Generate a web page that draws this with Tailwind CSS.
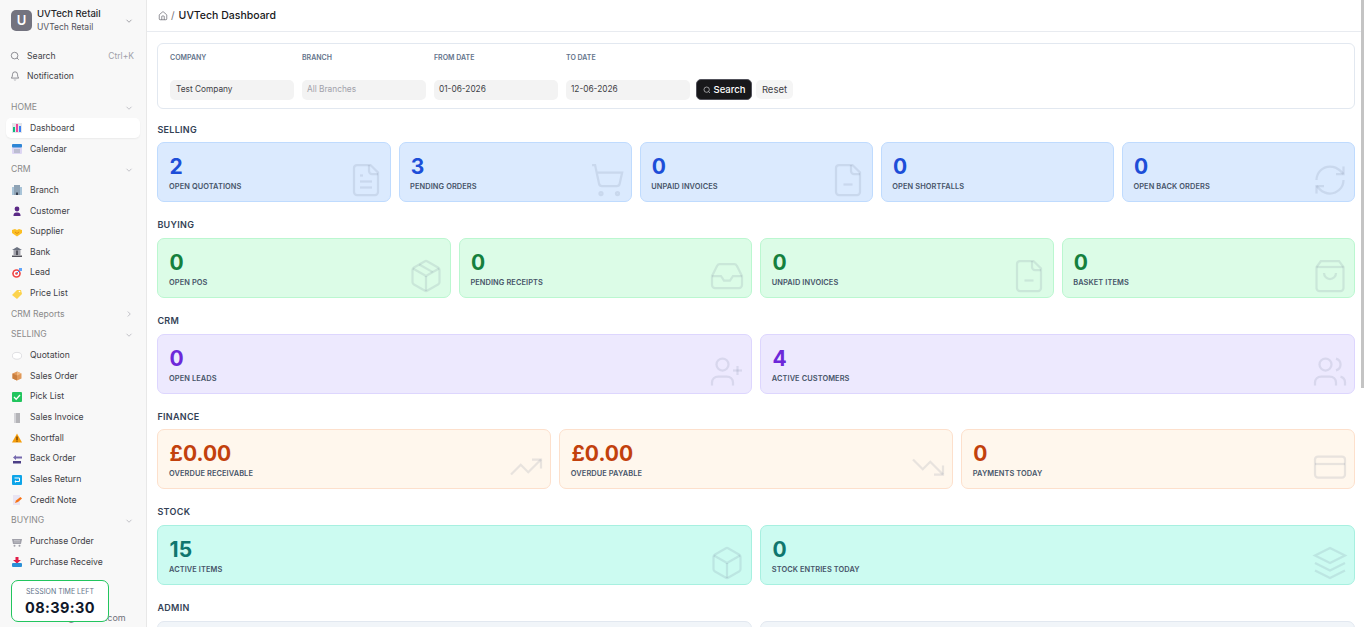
<!DOCTYPE html>
<html lang="en">
<head>
	<meta charset="UTF-8">
	<title>UVTech Dashboard</title>
	<script src="https://cdn.jsdelivr.net/npm/@tailwindcss/browser@4"></script>
</head>
<body class="h-screen overflow-hidden bg-white font-['Inter',sans-serif] text-[#27272a]">
<div class="flex h-full">
	<!-- sidebar -->
	<aside class="relative w-[147px] shrink-0 h-full overflow-hidden bg-[#f8f8f8] border-r border-[#e8e8e8]">
		<div class="flex items-center h-[41px] pl-[11px] pr-[12px]">
			<div class="w-[21px] h-[21px] rounded-[5px] bg-[#73737f] text-white flex items-center justify-center text-[13px] font-semibold">U</div>
			<div class="ml-[5px] flex-1 leading-[12.5px]">
				<div class="text-[9.5px] font-medium text-[#27272a]">UVTech Retail</div>
				<div class="text-[8.5px] text-[#52525b]">UVTech Retail</div>
			</div>
			<svg class="w-[10px] h-[10px] text-[#71717a]" viewBox="0 0 24 24" fill="none" stroke="currentColor" stroke-width="1.500"><path d="m6 9 6 6 6-6"/></svg>
		</div>
		<div class="mt-[5px] pl-[10px] pr-[12px] text-[8.65px] text-[#3f3f46]">
			<div class="flex items-center h-[20px]">
				<svg class="w-[10px] h-[10px] text-[#52525b]" viewBox="0 0 24 24" fill="none" stroke="currentColor" stroke-width="1.500"><circle cx="11" cy="11" r="8"/><path d="m21 21-4.300-4.300"/></svg>
				<span class="ml-[7px] flex-1">Search</span><span class="text-[#a1a1aa] text-[8.5px]">Ctrl+K</span>
			</div>
			<div class="flex items-center h-[20px]">
				<svg class="w-[10px] h-[10px] text-[#52525b]" viewBox="0 0 24 24" fill="none" stroke="currentColor" stroke-width="1.500"><path d="M6 8a6 6 0 0 1 12 0c0 7 3 9 3 9H3s3-2 3-9"/><path d="M10.300 21a1.940 1.940 0 0 0 3.400 0"/></svg>
				<span class="ml-[7px]">Notification</span>
			</div>
		</div>
		<nav class="mt-[11.4px] text-[8.65px] text-[#3f3f46]">
			<div class="flex items-center justify-between h-[20.67px] pl-[11px] pr-[12px] text-[#8a8a8a]">HOME<svg class="w-[10px] h-[10px]" viewBox="0 0 24 24" fill="none" stroke="#a1a1aa" stroke-width="1.500"><path d="m6 9 6 6 6-6"/></svg></div>
			<div class="flex items-center h-[20px] mb-[0.67px] mx-[6px] pl-[6px] bg-white rounded-[5px] shadow-[0_1px_2px_rgba(0,0,0,0.06)]">
				<svg class="w-[10px] h-[10px]" viewBox="0 0 10 10"><rect width="10" height="10" fill="#e5e7eb"/><rect x="1" y="4" width="2" height="5" fill="#10b981"/><rect x="4" y="1" width="2" height="8" fill="#ec4899"/><rect x="7" y="3" width="2" height="6" fill="#3b82f6"/></svg>
				<span class="ml-[8px]">Dashboard</span>
			</div>
			<div class="flex items-center h-[20.67px] pl-[12px]">
				<svg class="w-[10px] h-[10px]" viewBox="0 0 10 10"><rect width="10" height="10" rx="1" fill="#ddd6f3"/><rect width="10" height="3.500" rx="1" fill="#2f86d6"/><rect x="2" y="5.500" width="6" height="1" fill="#9ca3af"/><rect x="2" y="7.500" width="6" height="1" fill="#9ca3af"/></svg>
				<span class="ml-[8px]">Calendar</span>
			</div>
			<div class="flex items-center justify-between h-[20.67px] pl-[11px] pr-[12px] text-[#8a8a8a]">CRM<svg class="w-[10px] h-[10px]" viewBox="0 0 24 24" fill="none" stroke="#a1a1aa" stroke-width="1.500"><path d="m6 9 6 6 6-6"/></svg></div>
			<div class="flex items-center h-[20.67px] pl-[12px]">
				<svg class="w-[10px] h-[10px]" viewBox="0 0 10 10"><rect y="2" width="10" height="8" fill="#a9c4d8"/><rect x="2" width="6" height="10" fill="#8fa3b5"/><rect x="4" y="7.500" width="2" height="2.500" fill="#374151"/></svg>
				<span class="ml-[8px]">Branch</span>
			</div>
			<div class="flex items-center h-[20.67px] pl-[12px]">
				<svg class="w-[10px] h-[10px]" viewBox="0 0 10 10"><circle cx="5" cy="3" r="2.400" fill="#5b2a86"/><path d="M1.500 10c0-2 .5-3.500 3.500-3.500s3.500 1.500 3.500 3.500z" fill="#5b2a86"/></svg>
				<span class="ml-[8px]">Customer</span>
			</div>
			<div class="flex items-center h-[20.67px] pl-[12px]">
				<svg class="w-[10px] h-[10px]" viewBox="0 0 10 10"><path d="M0 3l3-1 2 1 2-1 3 1v3L5 9.500 0 6z" fill="#fbbf24"/><path d="M3 5l2 1.500L7 5" stroke="#d97706" stroke-width=".7" fill="none"/></svg>
				<span class="ml-[8px]">Supplier</span>
			</div>
			<div class="flex items-center h-[20.67px] pl-[12px]">
				<svg class="w-[10px] h-[10px]" viewBox="0 0 10 10"><path d="M5 0l5 3H0z" fill="#6b7280"/><rect x="1.500" y="3" width="7" height="5" fill="#a1a1aa"/><rect x="4" y="3.500" width="2" height="4.500" fill="#52525b"/><rect y="8.500" width="10" height="1.500" fill="#52525b"/></svg>
				<span class="ml-[8px]">Bank</span>
			</div>
			<div class="flex items-center h-[20.67px] pl-[12px]">
				<svg class="w-[10px] h-[10px]" viewBox="0 0 10 10"><circle cx="4.500" cy="5.500" r="4.300" fill="#ef4444"/><circle cx="4.500" cy="5.500" r="2.700" fill="#fff"/><circle cx="4.500" cy="5.500" r="1.300" fill="#ef4444"/><path d="M5 5l3-3" stroke="#3b82f6"/><rect x="7" y="0" width="3" height="3" fill="#60a5fa"/></svg>
				<span class="ml-[8px]">Lead</span>
			</div>
			<div class="flex items-center h-[20.67px] pl-[12px]">
				<svg class="w-[10px] h-[10px]" viewBox="0 0 10 10"><path d="M0 6l5-5 4 0 1 4-5 5z" fill="#fcd34d"/><circle cx="7.500" cy="2.500" r=".8" fill="#fff"/></svg>
				<span class="ml-[8px]">Price List</span>
			</div>
			<div class="flex items-center justify-between h-[20.67px] pl-[11px] pr-[12px] text-[#8a8a8a]">CRM Reports<svg class="w-[10px] h-[10px]" viewBox="0 0 24 24" fill="none" stroke="#a1a1aa" stroke-width="1.500"><path d="m9 18 6-6-6-6"/></svg></div>
			<div class="flex items-center justify-between h-[20.67px] pl-[11px] pr-[12px] text-[#8a8a8a]">SELLING<svg class="w-[10px] h-[10px]" viewBox="0 0 24 24" fill="none" stroke="#a1a1aa" stroke-width="1.500"><path d="m6 9 6 6 6-6"/></svg></div>
			<div class="flex items-center h-[20.67px] pl-[12px]">
				<svg class="w-[10px] h-[10px]" viewBox="0 0 10 10"><ellipse cx="5" cy="4.800" rx="4.600" ry="3.400" fill="#fff" stroke="#d4d4d8" stroke-width=".7"/></svg>
				<span class="ml-[8px]">Quotation</span>
			</div>
			<div class="flex items-center h-[20.67px] pl-[12px]">
				<svg class="w-[10px] h-[10px]" viewBox="0 0 10 10"><path d="M5 .5l4.500 2v5L5 9.500.5 7.500v-5z" fill="#e0995a"/><path d="M5 .5l4.500 2L5 4.500z" fill="#f0bb85"/><path d="M5 4.500v5L.5 7.500v-5z" fill="#c97f3f"/></svg>
				<span class="ml-[8px]">Sales Order</span>
			</div>
			<div class="flex items-center h-[20.67px] pl-[12px]">
				<svg class="w-[10px] h-[10px]" viewBox="0 0 10 10"><rect width="10" height="10" rx="1" fill="#22c55e"/><path d="M2 5l2.200 2.200L8 3" stroke="#fff" stroke-width="1.300" fill="none"/></svg>
				<span class="ml-[8px]">Pick List</span>
			</div>
			<div class="flex items-center h-[20.67px] pl-[12px]">
				<svg class="w-[10px] h-[10px]" viewBox="0 0 10 10"><rect x="2" y="0" width="6" height="10" fill="#b4b4b8"/><rect x="2" y="0" width="2" height="10" fill="#d4d4d8"/></svg>
				<span class="ml-[8px]">Sales Invoice</span>
			</div>
			<div class="flex items-center h-[20.67px] pl-[12px]">
				<svg class="w-[10px] h-[10px]" viewBox="0 0 10 10"><path d="M5 .5L10 9.500H0z" fill="#f59e0b"/><rect x="4.500" y="3.500" width="1" height="3.500" fill="#451a03"/><rect x="4.500" y="7.600" width="1" height="1" fill="#451a03"/></svg>
				<span class="ml-[8px]">Shortfall</span>
			</div>
			<div class="flex items-center h-[20.67px] pl-[12px]">
				<svg class="w-[10px] h-[10px]" viewBox="0 0 10 10"><path d="M4 1L1 3.500 4 6V4.500h6v-2H4z" fill="#7468ad"/><rect x="1" y="7" width="8" height="2.500" fill="#4c3f86"/></svg>
				<span class="ml-[8px]">Back Order</span>
			</div>
			<div class="flex items-center h-[20.67px] pl-[12px]">
				<svg class="w-[10px] h-[10px]" viewBox="0 0 10 10"><rect width="10" height="10" rx="1" fill="#0ea5e9"/><path d="M2.500 3h5v3.500h-4" stroke="#fff" fill="none"/><path d="M4 5L2.500 6.500 4 8z" fill="#fff"/></svg>
				<span class="ml-[8px]">Sales Return</span>
			</div>
			<div class="flex items-center h-[20.67px] pl-[12px]">
				<svg class="w-[10px] h-[10px]" viewBox="0 0 10 10"><rect x="1" width="7" height="10" fill="#e9e5f3"/><path d="M3 8l1-2.500L8.500 2 10 3.500 6 7z" fill="#f97316"/></svg>
				<span class="ml-[8px]">Credit Note</span>
			</div>
			<div class="flex items-center justify-between h-[20.67px] pl-[11px] pr-[12px] text-[#8a8a8a]">BUYING<svg class="w-[10px] h-[10px]" viewBox="0 0 24 24" fill="none" stroke="#a1a1aa" stroke-width="1.500"><path d="m6 9 6 6 6-6"/></svg></div>
			<div class="flex items-center h-[20.67px] pl-[12px]">
				<svg class="w-[10px] h-[10px]" viewBox="0 0 10 10"><path d="M0 2h10l-1 5H1z" fill="#a1a1aa"/><path d="M2 3.500h6M2 5h6" stroke="#d4d4d8" stroke-width=".6"/><circle cx="2.500" cy="8.700" r="1" fill="#a1a1aa"/><circle cx="7.500" cy="8.700" r="1" fill="#a1a1aa"/></svg>
				<span class="ml-[8px]">Purchase Order</span>
			</div>
			<div class="flex items-center h-[20.67px] pl-[12px]">
				<svg class="w-[10px] h-[10px]" viewBox="0 0 10 10"><path d="M3.500 0h3v3H9L5 6.500 1 3h2.500z" fill="#e11d48"/><rect y="6" width="10" height="4" rx="1" fill="#2b8fd6"/></svg>
				<span class="ml-[8px]">Purchase Receive</span>
			</div>
		</nav>
		<div class="absolute left-[41px] top-[611px] text-[9px] text-[#71717a] whitespace-nowrap">admin@uvtech.com</div>
		<div class="absolute left-[11px] top-[580px] w-[98px] h-[42px] rounded-[7px] border border-[#22c55e] bg-white flex flex-col items-center pt-[6px]">
			<div class="text-[7px] leading-[9px] text-[#64748b]">SESSION TIME LEFT</div>
			<div class="mt-[2px] text-[14.5px] leading-[19px] font-bold tracking-[0.4px] text-[#0f172a]">08:39:30</div>
		</div>
	</aside>

	<!-- main -->
	<main class="relative flex-1 min-w-0 h-full overflow-hidden">
		<header class="flex items-center h-[32px] pl-[11px] border-b border-[#e8ebf0]">
			<svg class="w-[10px] h-[10px] mt-[1px] text-[#52525b]" viewBox="0 0 24 24" fill="none" stroke="currentColor" stroke-width="1.500"><path d="M15 21v-8a1 1 0 0 0-1-1h-4a1 1 0 0 0-1 1v8"/><path d="M3 10a2 2 0 0 1 .709-1.528l7-5.999a2 2 0 0 1 2.582 0l7 5.999A2 2 0 0 1 21 10v9a2 2 0 0 1-2 2H5a2 2 0 0 1-2-2z"/></svg>
			<span class="ml-[3px] text-[10px] text-[#71717a]">/</span>
			<span class="ml-[4px] text-[10.5px] font-medium text-[#18181b]">UVTech Dashboard</span>
		</header>
		<div class="pl-[10.4px] pr-[9px] pt-[11px]">
			<div class="h-[66px] border border-[#e2e8f0] rounded-[6px] pl-[11.6px] pt-[10px] mb-[13.55px]">
				<div class="flex gap-[8px] text-[7px] leading-[8px] font-semibold text-[#64748b]">
					<div class="w-[124px]">COMPANY</div>
					<div class="w-[124px]">BRANCH</div>
					<div class="w-[124px]">FROM DATE</div>
					<div class="w-[124px]">TO DATE</div>
				</div>
				<div class="mt-[17px] flex items-center text-[8.3px] text-[#3f3f46]">
					<div class="w-[124px] h-[20px] rounded-[5px] bg-[#f3f3f3] flex items-center pl-[6px]">Test Company</div>
					<div class="ml-[8px] w-[124px] h-[20px] rounded-[5px] bg-[#f3f3f3] flex items-center pl-[5px] text-[#a1a1aa]">All Branches</div>
					<div class="ml-[8px] w-[124px] h-[20px] rounded-[5px] bg-[#f3f3f3] flex items-center pl-[5px]">01-06-2026</div>
					<div class="ml-[8px] w-[124px] h-[20px] rounded-[5px] bg-[#f3f3f3] flex items-center pl-[5px]">12-06-2026</div>
					<button class="ml-[6px] w-[56px] h-[21px] pt-[1px] rounded-[5px] bg-[#18181b] border border-[#52525b] text-white text-[9.5px] font-medium flex items-center justify-center">
						<svg class="w-[8px] h-[8px] mr-[3px] text-[#d4d4d8]" viewBox="0 0 24 24" fill="none" stroke="currentColor" stroke-width="2"><circle cx="11" cy="11" r="8"/><path d="m21 21-4.300-4.300"/></svg>Search
					</button>
					<button class="ml-[4px] w-[37px] h-[19px] pt-[1px] rounded-[5px] bg-[#f5f5f5] text-[9.5px] text-[#3f3f46] flex items-center justify-center">Reset</button>
				</div>
			</div>

			<section class="mb-[15.95px]">
				<h2 class="text-[9px] leading-[13.75px] font-semibold tracking-[0.3px] text-[#334155] mb-[6px]">SELLING</h2>
				<div class="grid grid-cols-5 gap-[8px]">
					<div class="relative h-[60px] rounded-[7px] border border-[#bfdbfe] bg-[#dbeafe] pl-[10.6px] pt-[12px]">
						<div class="pl-[0.6px] text-[21px] leading-[24px] font-bold text-[#1d4ed8]">2</div>
						<div class="mt-[3px] text-[7.4px] leading-[10px] font-semibold tracking-[0.1px] text-[#475569]">OPEN QUOTATIONS</div>
						<svg class="absolute right-[6px] bottom-[3px] w-[36px] h-[36px] text-[#64748b]/15" viewBox="0 0 24 24" fill="none" stroke="currentColor" stroke-width="1.500"><path d="M15 2H6a2 2 0 0 0-2 2v16a2 2 0 0 0 2 2h12a2 2 0 0 0 2-2V7Z"/><path d="M14 2v4a2 2 0 0 0 2 2h4"/><path d="M10 9H8"/><path d="M16 13H8"/><path d="M16 17H8"/></svg>
					</div>
					<div class="relative h-[60px] rounded-[7px] border border-[#bfdbfe] bg-[#dbeafe] pl-[10.6px] pt-[12px]">
						<div class="pl-[0.6px] text-[21px] leading-[24px] font-bold text-[#1d4ed8]">3</div>
						<div class="mt-[3px] text-[7.4px] leading-[10px] font-semibold tracking-[0.1px] text-[#475569]">PENDING ORDERS</div>
						<svg class="absolute right-[6px] bottom-[3px] w-[36px] h-[36px] text-[#64748b]/15" viewBox="0 0 24 24" fill="none" stroke="currentColor" stroke-width="1.500"><circle cx="8" cy="21" r="1"/><circle cx="19" cy="21" r="1"/><path d="M2.050 2.050h2l2.660 12.420a2 2 0 0 0 2 1.580h9.780a2 2 0 0 0 1.950-1.570l1.650-7.430H5.120"/></svg>
					</div>
					<div class="relative h-[60px] rounded-[7px] border border-[#bfdbfe] bg-[#dbeafe] pl-[10.6px] pt-[12px]">
						<div class="pl-[0.6px] text-[21px] leading-[24px] font-bold text-[#1d4ed8]">0</div>
						<div class="mt-[3px] text-[7.4px] leading-[10px] font-semibold tracking-[0.1px] text-[#475569]">UNPAID INVOICES</div>
						<svg class="absolute right-[6px] bottom-[3px] w-[36px] h-[36px] text-[#64748b]/15" viewBox="0 0 24 24" fill="none" stroke="currentColor" stroke-width="1.500"><path d="M15 2H6a2 2 0 0 0-2 2v16a2 2 0 0 0 2 2h12a2 2 0 0 0 2-2V7Z"/><path d="M14 2v4a2 2 0 0 0 2 2h4"/><path d="M9 15h6"/></svg>
					</div>
					<div class="relative h-[60px] rounded-[7px] border border-[#bfdbfe] bg-[#dbeafe] pl-[10.6px] pt-[12px]">
						<div class="pl-[0.6px] text-[21px] leading-[24px] font-bold text-[#1d4ed8]">0</div>
						<div class="mt-[3px] text-[7.4px] leading-[10px] font-semibold tracking-[0.1px] text-[#475569]">OPEN SHORTFALLS</div>
					</div>
					<div class="relative h-[60px] rounded-[7px] border border-[#bfdbfe] bg-[#dbeafe] pl-[10.6px] pt-[12px]">
						<div class="pl-[0.6px] text-[21px] leading-[24px] font-bold text-[#1d4ed8]">0</div>
						<div class="mt-[3px] text-[7.4px] leading-[10px] font-semibold tracking-[0.1px] text-[#475569]">OPEN BACK ORDERS</div>
						<svg class="absolute right-[6px] bottom-[3px] w-[36px] h-[36px] text-[#64748b]/15" viewBox="0 0 24 24" fill="none" stroke="currentColor" stroke-width="1.500"><path d="M3 12a9 9 0 0 1 9-9 9.750 9.750 0 0 1 6.740 2.740L21 8"/><path d="M21 3v5h-5"/><path d="M21 12a9 9 0 0 1-9 9 9.750 9.750 0 0 1-6.740-2.740L3 16"/><path d="M8 16H3v5"/></svg>
					</div>
				</div>
			</section>

			<section class="mb-[15.95px]">
				<h2 class="text-[9px] leading-[13.75px] font-semibold tracking-[0.3px] text-[#334155] mb-[6px]">BUYING</h2>
				<div class="grid grid-cols-4 gap-[8px]">
					<div class="relative h-[60px] rounded-[7px] border border-[#bbf7d0] bg-[#dcfce7] pl-[10.6px] pt-[12px]">
						<div class="pl-[0.6px] text-[21px] leading-[24px] font-bold text-[#15803d]">0</div>
						<div class="mt-[3px] text-[7.4px] leading-[10px] font-semibold tracking-[0.1px] text-[#475569]">OPEN POS</div>
						<svg class="absolute right-[6px] bottom-[3px] w-[36px] h-[36px] text-[#64748b]/15" viewBox="0 0 24 24" fill="none" stroke="currentColor" stroke-width="1.500"><path d="M21 8a2 2 0 0 0-1-1.730l-7-4a2 2 0 0 0-2 0l-7 4A2 2 0 0 0 3 8v8a2 2 0 0 0 1 1.730l7 4a2 2 0 0 0 2 0l7-4A2 2 0 0 0 21 16Z"/><path d="M3.300 7 12 12l8.700-5"/><path d="M12 22V12"/><path d="m7.500 4.270 9 5.150"/></svg>
					</div>
					<div class="relative h-[60px] rounded-[7px] border border-[#bbf7d0] bg-[#dcfce7] pl-[10.6px] pt-[12px]">
						<div class="pl-[0.6px] text-[21px] leading-[24px] font-bold text-[#15803d]">0</div>
						<div class="mt-[3px] text-[7.4px] leading-[10px] font-semibold tracking-[0.1px] text-[#475569]">PENDING RECEIPTS</div>
						<svg class="absolute right-[6px] bottom-[3px] w-[36px] h-[36px] text-[#64748b]/15" viewBox="0 0 24 24" fill="none" stroke="currentColor" stroke-width="1.500"><polyline points="22 12 16 12 14 15 10 15 8 12 2 12"/><path d="M5.450 5.110 2 12v6a2 2 0 0 0 2 2h16a2 2 0 0 0 2-2v-6l-3.450-6.890A2 2 0 0 0 16.760 4H7.240a2 2 0 0 0-1.790 1.110z"/></svg>
					</div>
					<div class="relative h-[60px] rounded-[7px] border border-[#bbf7d0] bg-[#dcfce7] pl-[10.6px] pt-[12px]">
						<div class="pl-[0.6px] text-[21px] leading-[24px] font-bold text-[#15803d]">0</div>
						<div class="mt-[3px] text-[7.4px] leading-[10px] font-semibold tracking-[0.1px] text-[#475569]">UNPAID INVOICES</div>
						<svg class="absolute right-[6px] bottom-[3px] w-[36px] h-[36px] text-[#64748b]/15" viewBox="0 0 24 24" fill="none" stroke="currentColor" stroke-width="1.500"><path d="M15 2H6a2 2 0 0 0-2 2v16a2 2 0 0 0 2 2h12a2 2 0 0 0 2-2V7Z"/><path d="M14 2v4a2 2 0 0 0 2 2h4"/><path d="M9 15h6"/></svg>
					</div>
					<div class="relative h-[60px] rounded-[7px] border border-[#bbf7d0] bg-[#dcfce7] pl-[10.6px] pt-[12px]">
						<div class="pl-[0.6px] text-[21px] leading-[24px] font-bold text-[#15803d]">0</div>
						<div class="mt-[3px] text-[7.4px] leading-[10px] font-semibold tracking-[0.1px] text-[#475569]">BASKET ITEMS</div>
						<svg class="absolute right-[6px] bottom-[3px] w-[36px] h-[36px] text-[#64748b]/15" viewBox="0 0 24 24" fill="none" stroke="currentColor" stroke-width="1.500"><path d="M6 2 3 6v14a2 2 0 0 0 2 2h14a2 2 0 0 0 2-2V6l-3-4Z"/><path d="M3 6h18"/><path d="M16 10a4 4 0 0 1-8 0"/></svg>
					</div>
				</div>
			</section>

			<section class="mb-[15.95px]">
				<h2 class="text-[9px] leading-[13.75px] font-semibold tracking-[0.3px] text-[#334155] mb-[6px]">CRM</h2>
				<div class="grid grid-cols-2 gap-[8px]">
					<div class="relative h-[60px] rounded-[7px] border border-[#ddd6fe] bg-[#ede9fe] pl-[10.6px] pt-[12px]">
						<div class="pl-[0.6px] text-[21px] leading-[24px] font-bold text-[#6d28d9]">0</div>
						<div class="mt-[3px] text-[7.4px] leading-[10px] font-semibold tracking-[0.1px] text-[#475569]">OPEN LEADS</div>
						<svg class="absolute right-[6px] bottom-[3px] w-[36px] h-[36px] text-[#64748b]/15" viewBox="0 0 24 24" fill="none" stroke="currentColor" stroke-width="1.500"><path d="M16 21v-2a4 4 0 0 0-4-4H6a4 4 0 0 0-4 4v2"/><circle cx="9" cy="7" r="4"/><line x1="19" x2="19" y1="8" y2="14"/><line x1="22" x2="16" y1="11" y2="11"/></svg>
					</div>
					<div class="relative h-[60px] rounded-[7px] border border-[#ddd6fe] bg-[#ede9fe] pl-[10.6px] pt-[12px]">
						<div class="pl-[0.6px] text-[21px] leading-[24px] font-bold text-[#6d28d9]">4</div>
						<div class="mt-[3px] text-[7.4px] leading-[10px] font-semibold tracking-[0.1px] text-[#475569]">ACTIVE CUSTOMERS</div>
						<svg class="absolute right-[6px] bottom-[3px] w-[36px] h-[36px] text-[#64748b]/15" viewBox="0 0 24 24" fill="none" stroke="currentColor" stroke-width="1.500"><path d="M16 21v-2a4 4 0 0 0-4-4H6a4 4 0 0 0-4 4v2"/><circle cx="9" cy="7" r="4"/><path d="M22 21v-2a4 4 0 0 0-3-3.870"/><path d="M16 3.130a4 4 0 0 1 0 7.750"/></svg>
					</div>
				</div>
			</section>

			<section class="mb-[15.95px]">
				<h2 class="text-[9px] leading-[13.75px] font-semibold tracking-[0.3px] text-[#334155] mb-[6px]">FINANCE</h2>
				<div class="grid grid-cols-3 gap-[8px]">
					<div class="relative h-[60px] rounded-[7px] border border-[#fde0cc] bg-[#fff7ed] pl-[10.6px] pt-[12px]">
						<div class="pl-[0.6px] text-[21px] leading-[24px] font-bold text-[#c2410c]">£0.00</div>
						<div class="mt-[3px] text-[7.4px] leading-[10px] font-semibold tracking-[0.1px] text-[#475569]">OVERDUE RECEIVABLE</div>
						<svg class="absolute right-[6px] bottom-[3px] w-[36px] h-[36px] text-[#64748b]/15" viewBox="0 0 24 24" fill="none" stroke="currentColor" stroke-width="1.500"><polyline points="22 7 13.500 15.500 8.500 10.500 2 17"/><polyline points="16 7 22 7 22 13"/></svg>
					</div>
					<div class="relative h-[60px] rounded-[7px] border border-[#fde0cc] bg-[#fff7ed] pl-[10.6px] pt-[12px]">
						<div class="pl-[0.6px] text-[21px] leading-[24px] font-bold text-[#c2410c]">£0.00</div>
						<div class="mt-[3px] text-[7.4px] leading-[10px] font-semibold tracking-[0.1px] text-[#475569]">OVERDUE PAYABLE</div>
						<svg class="absolute right-[6px] bottom-[3px] w-[36px] h-[36px] text-[#64748b]/15" viewBox="0 0 24 24" fill="none" stroke="currentColor" stroke-width="1.500"><polyline points="22 17 13.500 8.500 8.500 13.500 2 7"/><polyline points="16 17 22 17 22 11"/></svg>
					</div>
					<div class="relative h-[60px] rounded-[7px] border border-[#fde0cc] bg-[#fff7ed] pl-[10.6px] pt-[12px]">
						<div class="pl-[0.6px] text-[21px] leading-[24px] font-bold text-[#c2410c]">0</div>
						<div class="mt-[3px] text-[7.4px] leading-[10px] font-semibold tracking-[0.1px] text-[#475569]">PAYMENTS TODAY</div>
						<svg class="absolute right-[6px] bottom-[3px] w-[36px] h-[36px] text-[#64748b]/15" viewBox="0 0 24 24" fill="none" stroke="currentColor" stroke-width="1.500"><rect width="20" height="14" x="2" y="5" rx="2"/><line x1="2" x2="22" y1="10" y2="10"/></svg>
					</div>
				</div>
			</section>

			<section class="mb-[15.95px]">
				<h2 class="text-[9px] leading-[13.75px] font-semibold tracking-[0.3px] text-[#334155] mb-[6px]">STOCK</h2>
				<div class="grid grid-cols-2 gap-[8px]">
					<div class="relative h-[60px] rounded-[7px] border border-[#a7f0e0] bg-[#ccfbf1] pl-[10.6px] pt-[12px]">
						<div class="pl-[0.6px] text-[21px] leading-[24px] font-bold text-[#0f766e]">15</div>
						<div class="mt-[3px] text-[7.4px] leading-[10px] font-semibold tracking-[0.1px] text-[#475569]">ACTIVE ITEMS</div>
						<svg class="absolute right-[6px] bottom-[3px] w-[36px] h-[36px] text-[#64748b]/15" viewBox="0 0 24 24" fill="none" stroke="currentColor" stroke-width="1.500"><path d="M21 8a2 2 0 0 0-1-1.730l-7-4a2 2 0 0 0-2 0l-7 4A2 2 0 0 0 3 8v8a2 2 0 0 0 1 1.730l7 4a2 2 0 0 0 2 0l7-4A2 2 0 0 0 21 16Z"/><path d="M3.300 7 12 12l8.700-5"/><path d="M12 22V12"/></svg>
					</div>
					<div class="relative h-[60px] rounded-[7px] border border-[#a7f0e0] bg-[#ccfbf1] pl-[10.6px] pt-[12px]">
						<div class="pl-[0.6px] text-[21px] leading-[24px] font-bold text-[#0f766e]">0</div>
						<div class="mt-[3px] text-[7.4px] leading-[10px] font-semibold tracking-[0.1px] text-[#475569]">STOCK ENTRIES TODAY</div>
						<svg class="absolute right-[6px] bottom-[3px] w-[36px] h-[36px] text-[#64748b]/15" viewBox="0 0 24 24" fill="none" stroke="currentColor" stroke-width="1.500"><path d="M12 2 2 7l10 5 10-5-10-5z"/><path d="m2 17 10 5 10-5"/><path d="m2 12 10 5 10-5"/></svg>
					</div>
				</div>
			</section>

			<section>
				<h2 class="text-[9px] leading-[13.75px] font-semibold tracking-[0.3px] text-[#334155] mb-[6px]">ADMIN</h2>
				<div class="grid grid-cols-2 gap-[8px]">
					<div class="h-[60px] rounded-[7px] border border-[#e2e8f0] bg-[#f1f5f9]"></div>
					<div class="h-[60px] rounded-[7px] border border-[#e2e8f0] bg-[#f1f5f9]"></div>
				</div>
			</section>
		</div>
		<div class="absolute right-0 top-0 w-[3px] h-[388px] bg-[#c4c4c4]"></div>
	</main>
</div>
</body>
</html>
